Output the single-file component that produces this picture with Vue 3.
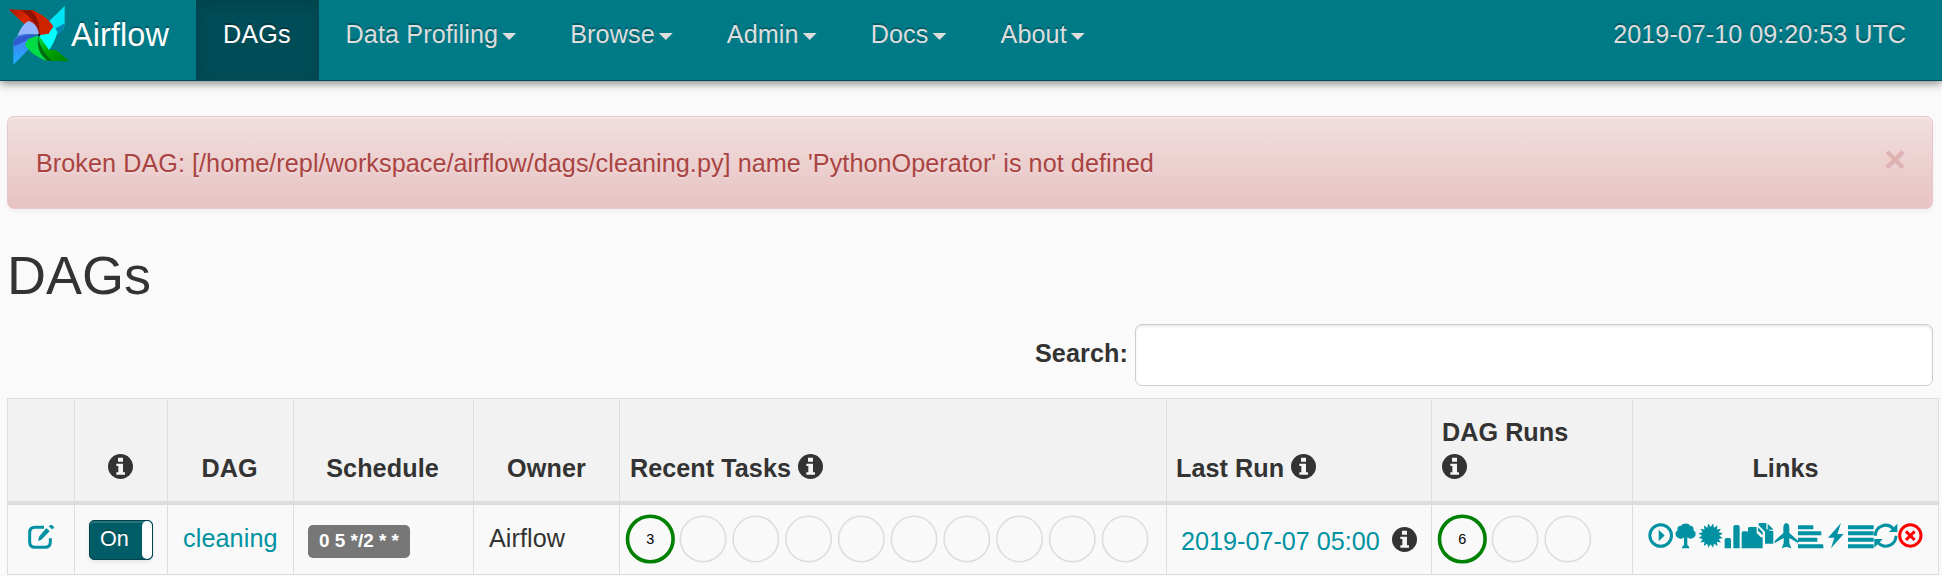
<script setup>
const menus = ['Data Profiling', 'Browse', 'Admin', 'Docs', 'About']
const columns = ['edit', 'toggle', 'dag', 'schedule', 'owner', 'tasks', 'last', 'runs', 'links']

const burst = Array.from({ length: 32 }, (_, i) => {
  const r = i % 2 ? 26 : 37
  const a = (i * Math.PI) / 16 + Math.PI / 16
  return `${(38 + r * Math.sin(a)).toFixed(1)},${(38 - r * Math.cos(a)).toFixed(1)}`
}).join(' ')
</script>

<template>
  <div class="page">
    <svg class="defs" aria-hidden="true">
      <symbol id="info" viewBox="0 0 75 75">
        <circle cx="37.5" cy="37.5" r="37.5" fill="#333" />
        <path d="M30 11h15v12H30zM25 29h20v26h6v7H25v-7h6V36h-6z" fill="#f5f5f5" />
      </symbol>
    </svg>

    <header class="navbar">
      <a class="brand">
        <svg class="logo" viewBox="24 15 186 183">
          <defs>
            <linearGradient id="red" x1="0" y1="0" x2="1" y2="0.6"><stop offset="0" stop-color="#a91700" /><stop offset=".55" stop-color="#dc2600" /><stop offset="1" stop-color="#bd1c00" /></linearGradient>
            <linearGradient id="green" x1="0" y1="0" x2="1" y2="1"><stop offset="0" stop-color="#00e34a" /><stop offset=".45" stop-color="#00a600" /><stop offset="1" stop-color="#008200" /></linearGradient>
            <linearGradient id="blue" x1="0" y1="0" x2="0" y2="1"><stop offset="0" stop-color="#4b78ed" /><stop offset="1" stop-color="#1fb0ff" /></linearGradient>
          </defs>
          <path d="M194 18V72C193 91 176 103 158 106L118 106L146 65Z" fill="#00e5f5" />
          <path d="M194 70C193 93 175 104 158 108L118 108C144 96 166 86 194 70Z" fill="#0087b3" />
          <path d="M118 106C138 99 151 90 165 83L172 96C168 116 157 136 148 149C133 144 124 130 118 106Z" fill="#00ffff" />
          <path d="M26 28L94 31C111 32 117 44 119 62V104L66 66Z" fill="url(#red)" />
          <path d="M65 31L94 31C111 32 119 45 119 103C111 73 91 52 65 31Z" fill="#8e1200" />
          <path d="M91 31C112 34 142 52 160 79L146 101L120 105C119 70 111 45 91 31Z" fill="#cf2300" />
          <path d="M40 194V132C42 112 57 104 76 103L117 104L90 144Z" fill="url(#blue)" />
          <path d="M41 131C45 110 61 103 117 105C91 114 70 126 41 139Z" fill="#3159cf" />
          <path d="M52 108C61 85 76 65 87 63C105 69 115 84 117 104C88 101 69 101 52 108Z" fill="#93b5ff" />
          <path d="M117 107L147 150L169 151L208 184L144 183C119 181 113 165 113 142Z" fill="url(#green)" />
          <path d="M115 110C119 138 132 159 157 183L143 183C120 181 112 160 115 110Z" fill="#006c11" />
          <path d="M115 106L84 117L75 136C91 158 113 174 143 183C116 162 109 139 115 106Z" fill="#00dc45" />
          <circle cx="117" cy="105" r="4" fill="#172430" />
        </svg>
        <span>Airflow</span>
      </a>
      <nav class="menu">
        <a class="item active">DAGs</a>
        <a v-for="m in menus" :key="m" class="item">{{ m }}<i class="caret"></i></a>
      </nav>
      <span class="clock">2019-07-10 09:20:53 UTC</span>
    </header>

    <main class="content">
      <div class="alert">
        <span>Broken DAG: [/home/repl/workspace/airflow/dags/cleaning.py] name 'PythonOperator' is not defined</span>
        <button class="close">×</button>
      </div>
      <h2>DAGs</h2>
      <div class="search">
        <label for="dag-search">Search:</label>
        <input id="dag-search" type="text" />
      </div>

      <table>
        <colgroup><col v-for="c in columns" :key="c" :class="'col-' + c" /></colgroup>
        <thead>
          <tr>
            <th></th>
            <th class="narrow"><svg class="icon"><use href="#info" /></svg></th>
            <th class="narrow">DAG</th>
            <th class="narrow">Schedule</th>
            <th>Owner</th>
            <th class="left">Recent Tasks <svg class="icon"><use href="#info" /></svg></th>
            <th class="left last-head">Last Run <svg class="icon"><use href="#info" /></svg></th>
            <th class="left">DAG Runs<br /><svg class="icon"><use href="#info" /></svg></th>
            <th>Links</th>
          </tr>
        </thead>
        <tbody>
          <tr>
            <td class="edit">
              <svg class="icon teal" viewBox="0 0 75 75">
                <path d="M48 7H21Q5 7 5 23V51Q5 67 21 67H51Q67 67 67 51V40" fill="none" stroke="currentColor" stroke-width="9" />
                <path d="M55 9L65 19L40 44L30 48L34 34ZM68 0H72L78 6V9L72 13L62 4Z" />
              </svg>
            </td>
            <td class="switch"><span class="toggle"><span>On</span><i></i></span></td>
            <td class="dag"><a>cleaning</a></td>
            <td class="schedule"><span class="badge">0 5 */2 * *</span></td>
            <td class="owner">Airflow</td>
            <td class="rings">
              <svg width="536" height="56">
                <circle cx="30.3" cy="28" r="22.8" class="done" />
                <text x="30.3" y="33">3</text>
                <circle v-for="n in 9" :key="n" :cx="30.3 + n * 52.75" cy="28" r="22.7" class="idle" />
              </svg>
            </td>
            <td class="last"><a>2019-07-07 05:00</a><svg class="icon"><use href="#info" /></svg></td>
            <td class="rings">
              <svg width="190" height="56">
                <circle cx="30.3" cy="28" r="22.8" class="done" />
                <text x="30.3" y="33">6</text>
                <circle v-for="n in 2" :key="n" :cx="30.3 + n * 52.75" cy="28" r="22.7" class="idle" />
              </svg>
            </td>
            <td>
              <div class="links">
                <svg viewBox="0 0 75 75"><circle cx="38" cy="37.5" r="32.5" class="ring" /><path d="M32 20L50 37.5L32 55Z" /></svg>
                <svg viewBox="0 0 75 75"><path d="M25 8C28 -1 48 -1 51 8C60 8 64 15 61 22C71 26 70 42 60 45C54 49 48 47 43 43V66Q49 68 49 76H27Q27 68 33 66V43C28 48 21 49 16 45C5 42 5 26 14 22C11 14 16 8 25 8Z" /></svg>
                <svg viewBox="0 0 75 75"><polygon :points="burst" /></svg>
                <svg viewBox="0 0 75 75"><path d="M5 76V50Q5 45 10 45H19Q24 45 24 50V76ZM31 76V12Q31 6 37 6H44Q50 6 50 12V76ZM56 76V30Q56 25 61 25H70Q76 25 76 30V76Z" /></svg>
                <svg viewBox="0 0 75 75"><path d="M0 16Q0 12 4 12H26V30L39 43H44V76H0ZM30 13L44 27V37L30 23ZM32 0H55V18L69 24H76V62H51V26L32 7ZM59 2L75 18V20H59Z" /></svg>
                <svg viewBox="0 0 75 75"><path d="M40 0Q49 2 49 14V30L73 51Q77 54 75 60L49 45V61L55 76L40 71L26 76L32 61V45L5 60Q3 55 8 51L31 30V14Q31 2 40 0Z" /></svg>
                <svg viewBox="0 0 75 75"><path d="M0 7H43Q46 7 46 10V19H0ZM0 25H67Q70 25 70 28V37H0ZM0 44H55Q58 44 58 47V56H0ZM0 64H73Q76 64 76 67V76H0Z" /></svg>
                <svg viewBox="0 0 75 75"><path d="M54 0L15 44H34L24 76L62 33H43Z" /></svg>
                <svg viewBox="0 0 75 75"><path d="M0 7H77V19H0ZM0 25H77V37H0ZM0 44H77V56H0ZM0 64H77V76H0Z" /></svg>
                <svg viewBox="0 0 75 75"><path d="M7 38A31 31 0 0 1 60 16M69 38A31 31 0 0 1 16 60" class="arc" /><path d="M73 2V27H48ZM4 74V48H29Z" /></svg>
                <svg viewBox="0 0 75 75" class="delete"><circle cx="37" cy="37.5" r="32" class="ring" /><path d="M24 25L50 51M50 25L24 51" class="cross" /></svg>
              </div>
            </td>
          </tr>
        </tbody>
      </table>
    </main>
  </div>
</template>

<style>
html, body { margin: 0; overflow: hidden; background: #fafafa; }
</style>

<style scoped>
* { box-sizing: border-box; }
.page {
  height: 576px;
  overflow: hidden;
  background: #fafafa;
  color: #333;
  font: 25.2px/36px "Liberation Sans", Arial, sans-serif;
}
.defs { display: block; width: 0; height: 0; }
.navbar {
  display: flex;
  height: 81px;
  background: #007a87;
  border-bottom: 1px solid #004d57;
  box-shadow: 0 2px 9px rgba(0, 0, 0, .5);
  color: #ddd;
  text-shadow: 0 -2px 0 rgba(0, 0, 0, .25);
}
.brand {
  display: flex;
  width: 196px;
  padding: 5px 0 0 8px;
  color: #fff;
  font-size: 32.4px;
  letter-spacing: .1px;
}
.brand span { margin: 12px 0 0 1px; }
.logo { width: 62px; height: 61px; flex: none; }
.menu { display: flex; flex: 1; letter-spacing: .1px; }
.item { display: flex; padding: 16px 27px 0; }
.item.active { padding-right: 28px; background: #004d57; color: #fff; box-shadow: inset 0 5px 16px rgba(0, 0, 0, .15); }
.caret {
  margin: 17px 0 0 4px;
  width: 14px;
  height: 7px;
  background: #ddd;
  clip-path: polygon(0 0, 100% 0, 50% 100%);
}
.clock { padding: 16px 36px 0 0; }
.content { padding: 35px 3px 0 7px; }
.alert {
  display: flex;
  justify-content: space-between;
  width: 1926px;
  height: 93px;
  padding: 28px 26px 0 28px;
  border: 1px solid #ebc8cd;
  border-radius: 7px;
  background: linear-gradient(#f2dede, #e7c3c3);
  box-shadow: inset 0 2px 0 rgba(255, 255, 255, .25), 0 2px 4px rgba(0, 0, 0, .05);
  color: #a94442;
  text-shadow: 0 2px 0 rgba(255, 255, 255, .2);
  letter-spacing: .052px;
}
.close {
  height: 38px;
  margin-top: -5px;
  padding: 0;
  border: 0;
  background: none;
  color: #dfb2b2;
  font: bold 37.8px/38px "Liberation Sans", Arial, sans-serif;
}
h2 { margin: 36px 0 0; font-size: 54px; line-height: 60px; font-weight: 400; }
.search { display: flex; justify-content: flex-end; width: 1926px; margin-top: 19px; }
.search label { margin: 11px 7px 0 0; font-weight: 700; letter-spacing: .1px; }
.search input {
  width: 798px;
  height: 62px;
  border: 1px solid #ccc;
  border-radius: 7px;
  background: #fff;
  box-shadow: inset 0 2px 2px rgba(0, 0, 0, .075);
}
table {
  width: 1932px;
  margin-top: 12px;
  border-collapse: separate;
  border-spacing: 0;
  table-layout: fixed;
  border: solid #ddd;
  border-width: 1px 0 0 1px;
}
th, td { padding: 0; border-right: 1px solid #ddd; }
th {
  height: 106px;
  padding-bottom: 15px;
  border-bottom: 4px solid #ddd;
  background: #f2f2f2;
  text-align: center;
  vertical-align: bottom;
  line-height: 36px;
  letter-spacing: .08px;
}
th.narrow { padding-right: 2px; }
th.left { padding-left: 10px; text-align: left; white-space: nowrap; letter-spacing: .04px; }
th.last-head { padding-left: 9px; }
td { height: 70px; border-bottom: 1px solid #ddd; background: #f9f9f9; vertical-align: top; }
.col-edit { width: 67px; }
.col-toggle { width: 93px; }
.col-dag { width: 126px; }
.col-schedule { width: 180px; }
.col-owner { width: 146px; }
.col-tasks { width: 547px; }
.col-last { width: 265px; }
.col-runs { width: 201px; }
.col-links { width: 306px; }
.icon { display: inline-block; width: 25px; height: 25px; vertical-align: -2px; overflow: visible; }
.teal { display: block; fill: #0092a2; color: #0092a2; }
td a { color: #0092a2; }
.edit { padding: 20px 0 0 20px; }
.switch { padding: 15px 0 0 14px; }
.toggle {
  display: flex;
  justify-content: space-between;
  width: 64px;
  height: 40px;
  padding-left: 10px;
  border: 1px solid #00434b;
  border-radius: 5px;
  background: #005c66;
  box-shadow: inset 0 2px 0 rgba(255, 255, 255, .15), 0 2px 4px rgba(0, 0, 0, .08);
  color: #fff;
  font-size: 21.6px;
  text-shadow: 0 -2px 0 rgba(0, 0, 0, .2);
}
.toggle i { width: 10px; height: 38px; border-radius: 5px; background: #fff; }
.dag { padding: 15px 0 0 15px; letter-spacing: .1px; }
.schedule { padding: 20px 0 0 14px; }
.badge {
  display: block;
  width: 102px;
  height: 33px;
  border-radius: 5px;
  background: #777;
  color: #fff;
  font-size: 18.9px;
  font-weight: 700;
  line-height: 31px;
  text-align: center;
  white-space: nowrap;
}
.owner { padding: 15px 0 0 15px; letter-spacing: .05px; }
.rings { padding-top: 6px; line-height: 0; }
.rings svg { display: block; }
.rings circle { fill: none; }
.done { stroke: #008000; stroke-width: 3.6; }
.idle { stroke: #ddd; stroke-width: 1.6; }
.rings text { fill: #000; font-size: 14.4px; text-anchor: middle; }
.last { padding: 18px 0 0 14px; white-space: nowrap; }
.last .icon { margin-left: 12px; vertical-align: -2px; }
.links { display: flex; padding: 18px 0 0 15px; }
.links svg { width: 25px; height: 25px; flex: none; overflow: visible; fill: #0092a2; stroke: none; }
.links .ring { fill: none; stroke: #0092a2; stroke-width: 9; }
.links .arc { fill: none; stroke: #0092a2; stroke-width: 9; }
.links .delete .ring { stroke: #f00; }
.links .cross { stroke: #f00; stroke-width: 9; }
</style>
